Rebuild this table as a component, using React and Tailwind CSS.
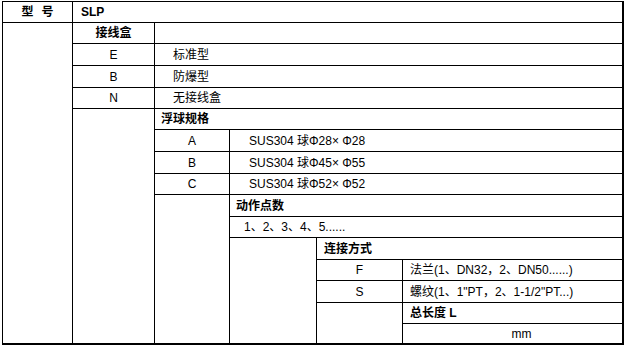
const font = { fontFamily: '"Liberation Sans", "Noto Sans CJK SC", sans-serif' };

function Cell({ className = "", children }) {
  return (
    <div className={"flex items-center border-r border-b border-black whitespace-nowrap " + className}>
      {children}
    </div>
  );
}

export default function App() {
  return (
    <div className="w-[627px] h-[349px] bg-white pt-px pl-[2px]" style={font}>
      <div
        className="grid w-[622px] border-l border-t border-black text-[12px] leading-none text-black
          grid-cols-[70px_82px_75px_87px_86px_221px]
          grid-rows-[21px_21px_22px_22px_21px_21px_22px_22px_21px_22px_21px_22px_21px_22px_21px_21px]"
      >
        {/* row 1 */}
        <Cell className="col-start-1 row-start-1 justify-center gap-[8px] font-bold">
          <span>型</span>
          <span>号</span>
        </Cell>
        <Cell className="col-start-2 col-span-5 row-start-1 pl-[8px] font-bold !border-r-2">SLP</Cell>

        {/* column 1 filler */}
        <Cell className="col-start-1 row-start-2 row-span-15 !border-b-2" />

        {/* 接线盒 */}
        <Cell className="col-start-2 row-start-2 justify-center font-bold">接线盒</Cell>
        <Cell className="col-start-3 col-span-4 row-start-2 !border-r-2" />
        <Cell className="col-start-2 row-start-3 justify-center">E</Cell>
        <Cell className="col-start-3 col-span-4 row-start-3 pl-[18px] !border-r-2">标准型</Cell>
        <Cell className="col-start-2 row-start-4 justify-center">B</Cell>
        <Cell className="col-start-3 col-span-4 row-start-4 pl-[18px] !border-r-2">防爆型</Cell>
        <Cell className="col-start-2 row-start-5 justify-center">N</Cell>
        <Cell className="col-start-3 col-span-4 row-start-5 pl-[18px] !border-r-2">无接线盒</Cell>

        {/* column 2 filler */}
        <Cell className="col-start-2 row-start-6 row-span-11 !border-b-2" />

        {/* 浮球规格 */}
        <Cell className="col-start-3 col-span-4 row-start-6 pl-[6px] font-bold !border-r-2">浮球规格</Cell>
        <Cell className="col-start-3 row-start-7 justify-center">A</Cell>
        <Cell className="col-start-4 col-span-3 row-start-7 pl-[19px] !border-r-2">SUS304 球Φ28× Φ28</Cell>
        <Cell className="col-start-3 row-start-8 justify-center">B</Cell>
        <Cell className="col-start-4 col-span-3 row-start-8 pl-[19px] !border-r-2">SUS304 球Φ45× Φ55</Cell>
        <Cell className="col-start-3 row-start-9 justify-center">C</Cell>
        <Cell className="col-start-4 col-span-3 row-start-9 pl-[19px] !border-r-2">SUS304 球Φ52× Φ52</Cell>

        {/* column 3 filler */}
        <Cell className="col-start-3 row-start-10 row-span-7 !border-b-2" />

        {/* 动作点数 */}
        <Cell className="col-start-4 col-span-3 row-start-10 pl-[6px] font-bold !border-r-2">动作点数</Cell>
        <Cell className="col-start-4 col-span-3 row-start-11 pl-[14px] !border-r-2">1、2、3、4、5......</Cell>

        {/* column 4 filler */}
        <Cell className="col-start-4 row-start-12 row-span-5 !border-b-2" />

        {/* 连接方式 */}
        <Cell className="col-start-5 col-span-2 row-start-12 pl-[7px] font-bold !border-r-2">连接方式</Cell>
        <Cell className="col-start-5 row-start-13 justify-center">F</Cell>
        <Cell className="col-start-6 row-start-13 pl-[7px] !border-r-2">法兰(1、DN32，2、DN50......)</Cell>
        <Cell className="col-start-5 row-start-14 justify-center">S</Cell>
        <Cell className="col-start-6 row-start-14 pl-[7px] !border-r-2">螺纹(1、1"PT，2、1-1/2"PT...)</Cell>

        {/* column 5 filler */}
        <Cell className="col-start-5 row-start-15 row-span-2 !border-b-2" />

        {/* 总长度 */}
        <Cell className="col-start-6 row-start-15 pl-[7px] font-bold !border-r-2">总长度 L</Cell>
        <Cell className="col-start-6 row-start-16 justify-center pl-[18px] !border-r-2 !border-b-2">mm</Cell>
      </div>
    </div>
  );
}
